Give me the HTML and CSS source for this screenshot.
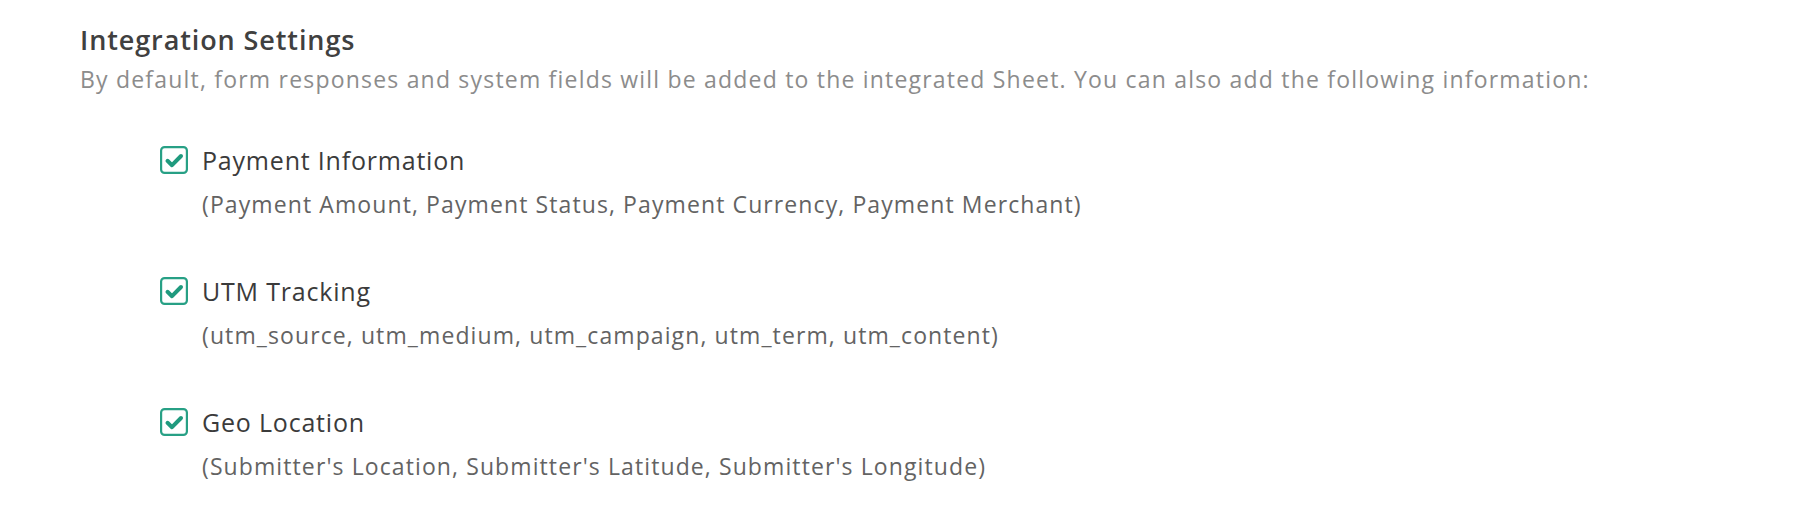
FILE: index.html
```html
<!DOCTYPE html>
<html lang="en">
<head>
    <meta charset="UTF-8">
    <meta name="viewport" content="width=device-width, initial-scale=1.0">
    <title>Integration Settings</title>
    <link rel="stylesheet" href="styles.css">
</head>
<body>
    <div class="settings">
        <h2 class="settings-title">Integration Settings</h2>
        <p class="settings-desc">By default, form responses and system fields will be added to the integrated Sheet. You can also add the following information:</p>

        <div class="option-list">
            <label class="option">
                <span class="check">
                    <svg viewBox="0 0 28 28" width="28" height="28"><rect x="1.1" y="1.1" width="25.8" height="25.8" rx="3.5" fill="none" stroke="#27a085" stroke-width="2.2"/><path d="M7.5 14.8 L12 19.2 L21 10" fill="none" stroke="#1f9a7e" stroke-width="4" stroke-linecap="round" stroke-linejoin="round"/></svg>
                </span>
                <span class="option-text">
                    <span class="option-name">Payment Information</span>
                    <span class="option-fields">(Payment Amount, Payment Status, Payment Currency, Payment Merchant)</span>
                </span>
            </label>
            <label class="option">
                <span class="check">
                    <svg viewBox="0 0 28 28" width="28" height="28"><rect x="1.1" y="1.1" width="25.8" height="25.8" rx="3.5" fill="none" stroke="#27a085" stroke-width="2.2"/><path d="M7.5 14.8 L12 19.2 L21 10" fill="none" stroke="#1f9a7e" stroke-width="4" stroke-linecap="round" stroke-linejoin="round"/></svg>
                </span>
                <span class="option-text">
                    <span class="option-name">UTM Tracking</span>
                    <span class="option-fields">(utm_source, utm_medium, utm_campaign, utm_term, utm_content)</span>
                </span>
            </label>
            <label class="option">
                <span class="check">
                    <svg viewBox="0 0 28 28" width="28" height="28"><rect x="1.1" y="1.1" width="25.8" height="25.8" rx="3.5" fill="none" stroke="#27a085" stroke-width="2.2"/><path d="M7.5 14.8 L12 19.2 L21 10" fill="none" stroke="#1f9a7e" stroke-width="4" stroke-linecap="round" stroke-linejoin="round"/></svg>
                </span>
                <span class="option-text">
                    <span class="option-name">Geo Location</span>
                    <span class="option-fields">(Submitter's Location, Submitter's Latitude, Submitter's Longitude)</span>
                </span>
            </label>
        </div>
    </div>
</body>
</html>
```

FILE: styles.css
```css
/* base */
* {
    box-sizing: border-box;
    margin: 0;
    padding: 0;
}
body {
    font-family: "Open Sans", "Liberation Sans", sans-serif;
    background: #fff;
}
/* container */
.settings {
    padding: 23px 0 0 80px;
}
.settings-title {
    font-size: 27px;
    line-height: 34px;
    font-weight: 600;
    letter-spacing: 0.9px;
    color: #404040;
}
.settings-desc {
    margin-top: 7px;
    font-size: 23px;
    line-height: 30px;
    letter-spacing: 1.2px;
    color: #8c8c8c;
}
/* options */
.option-list {
    display: flex;
    flex-direction: column;
    gap: 58px;
    margin-top: 52px;
    padding-left: 80px;
}
.option {
    display: flex;
    gap: 14px;
    cursor: pointer;
}
.check {
    flex: none;
    width: 28px;
    height: 28px;
}
.check svg {
    display: block;
}
.option-text {
    display: flex;
    flex-direction: column;
}
.option-name {
    font-size: 25px;
    line-height: 28px;
    letter-spacing: 0.8px;
    color: #3b3b3b;
}
.option-fields {
    margin-top: 15px;
    font-size: 23px;
    line-height: 30px;
    letter-spacing: 1.1px;
    color: #636363;
}
```
